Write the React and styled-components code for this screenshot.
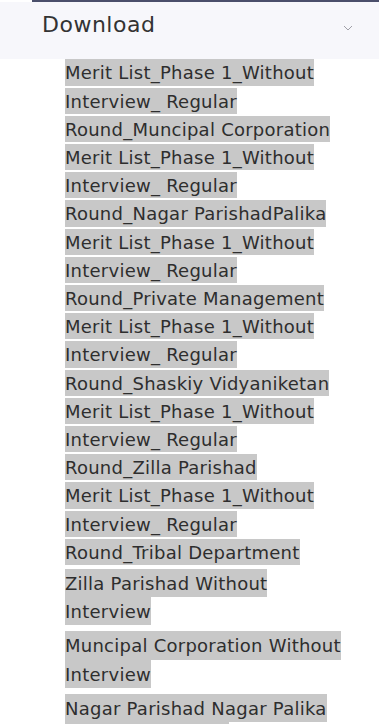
import React from 'react';
import styled, { createGlobalStyle } from 'styled-components';

const GlobalStyle = createGlobalStyle`
  body {
    margin: 0;
    background: #fff;
    font-family: "DejaVu Sans", "Noto Sans", sans-serif;
    color: #333;
  }
`;

const Page = styled.div`
  width: 379px;
  height: 724px;
  overflow: hidden;
  background: #fff;
`;

const TopRule = styled.div`
  height: 2px;
  margin-left: 32px;
  background: #4b4f6b;
`;

const Header = styled.div`
  height: 57px;
  box-sizing: border-box;
  background: #f7f7fb;
  display: flex;
  align-items: flex-start;
  justify-content: space-between;
  padding: 9px 26px 0 42px;
`;

const Title = styled.h2`
  margin: 0;
  font-size: 22px;
  line-height: 28px;
  letter-spacing: 0.5px;
  font-weight: 400;
  color: #333;
`;

const Chevron = styled.svg`
  width: 10px;
  height: 6px;
  margin-top: 14px;
`;

const List = styled.div`
  padding: 0 29px 0 65px;
  font-size: 18px;
  letter-spacing: 0.25px;
  line-height: 28.2px;
`;

const Item = styled.div`
  margin: ${p => (p.$spaced ? '3px 0 6px' : '0')};
`;

const Mark = styled.span`
  background: #c8c8c8;
  color: #2e2e2e;
  padding: ${p => (p.$full ? '3.6px 0' : '2.6px 0')};
  -webkit-box-decoration-break: clone;
  box-decoration-break: clone;
`;

const meritLists = [
  'Round_Muncipal Corporation',
  'Round_Nagar ParishadPalika',
  'Round_Private Management',
  'Round_Shaskiy Vidyaniketan',
  'Round_Zilla Parishad',
  'Round_Tribal Department',
];

const others = [
  'Zilla Parishad Without Interview',
  'Muncipal Corporation Without Interview',
  'Nagar Parishad Nagar Palika Without Interview',
];

export default function App() {
  return (
    <Page>
      <GlobalStyle />
      <TopRule />
      <Header>
        <Title>Download</Title>
        <Chevron viewBox="0 0 10 6" fill="none">
          <path d="M1 1l4 4 4-4" stroke="#a0a0a8" strokeWidth="1" />
        </Chevron>
      </Header>
      <List>
        {meritLists.map((round, i) => (
          <Item key={i}>
            <Mark>
              Merit List_Phase 1_Without Interview_ Regular
              <br />
              {round}
            </Mark>
          </Item>
        ))}
        {others.map((name, i) => (
          <Item key={i} $spaced>
            <Mark $full>{name}</Mark>
          </Item>
        ))}
      </List>
    </Page>
  );
}
